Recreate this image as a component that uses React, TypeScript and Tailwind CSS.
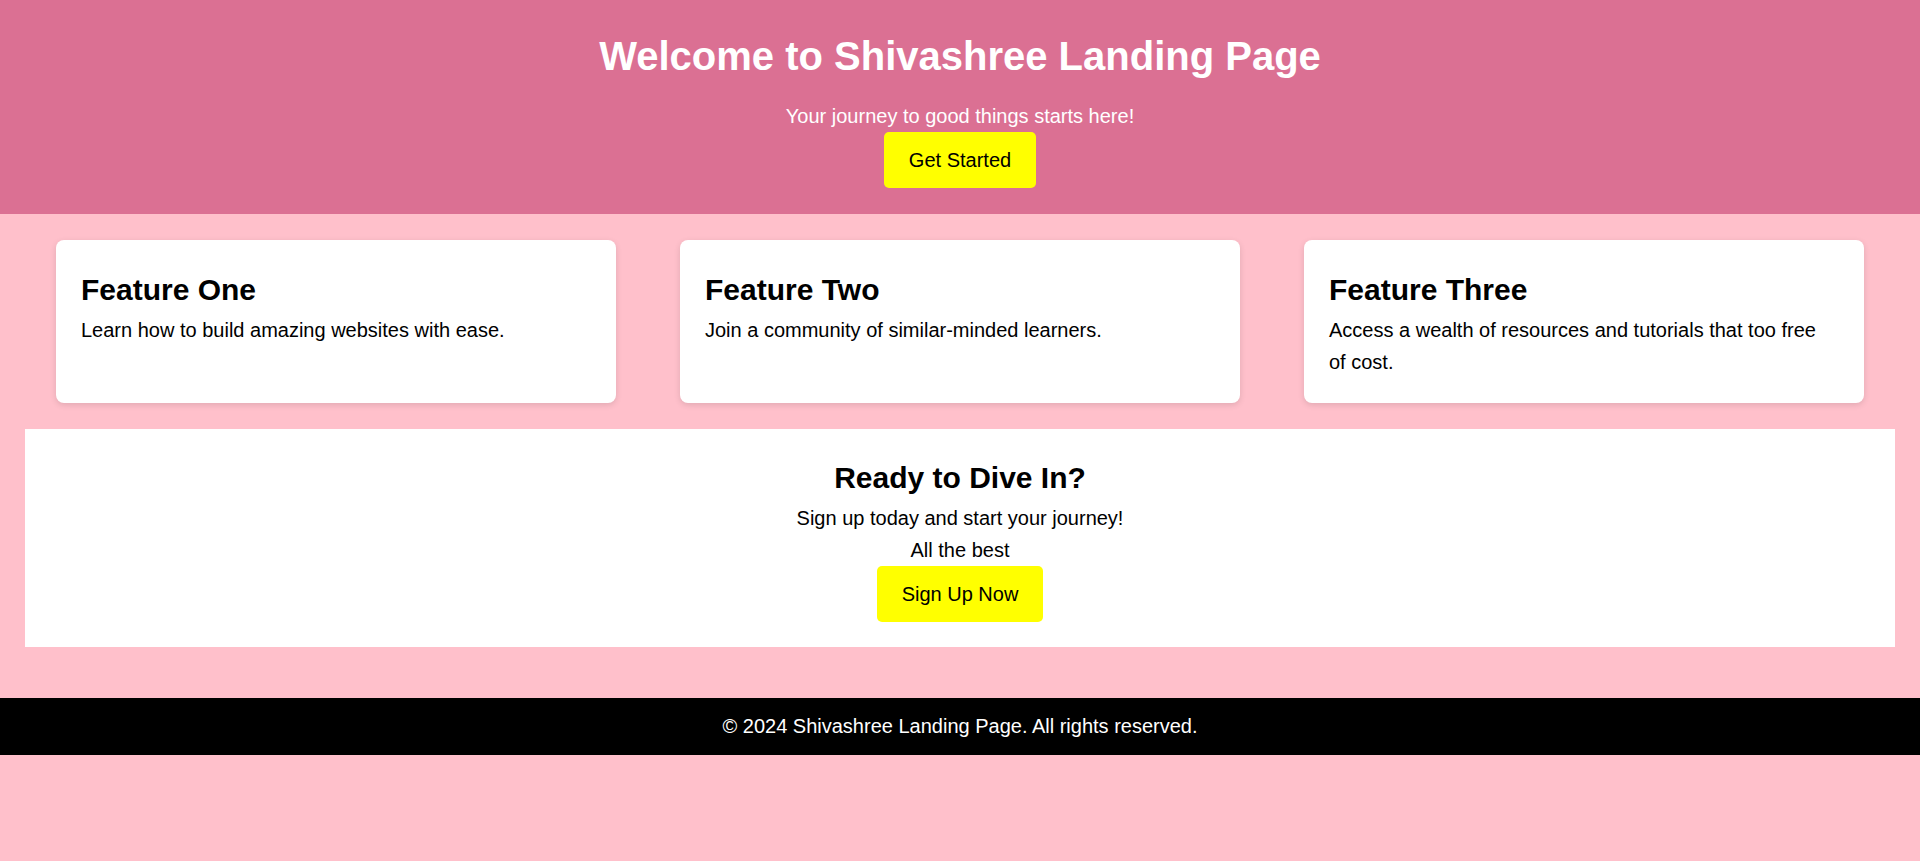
import React from "react";

const features = [
  { title: "Feature One", text: "Learn how to build amazing websites with ease." },
  { title: "Feature Two", text: "Join a community of similar-minded learners." },
  {
    title: "Feature Three",
    text: "Access a wealth of resources and tutorials that too free of cost.",
  },
];

export default function App() {
  return (
    <div
      className="min-h-[861px] bg-[#ffc0cb] text-black text-[20px] leading-[1.6]"
      style={{ fontFamily: '"Liberation Sans", Arial, sans-serif' }}
    >
      <header className="bg-[#db7093] text-white text-center pt-6 pb-[26px]">
        <h1 className="text-[40px] font-bold leading-[1.6] mb-3">
          Welcome to Shivashree Landing Page
        </h1>
        <p>Your journey to good things starts here!</p>
        <button className="bg-[#ffff00] text-black px-[25px] py-3 rounded-[5px] text-[20px] leading-[1.6]">
          Get Started
        </button>
      </header>

      <section className="flex gap-16 px-14 mt-[26px]">
        {features.map((f) => (
          <div
            key={f.title}
            className="flex-1 bg-white rounded-lg pt-[26px] pb-[25px] pl-[25px] pr-[28px] shadow-[0_2px_6px_rgba(0,0,0,0.12)]"
          >
            <h2 className="text-[30px] font-bold leading-[1.6]">{f.title}</h2>
            <p>{f.text}</p>
          </div>
        ))}
      </section>

      <section className="bg-white mx-[25px] mt-[26px] mb-[51px] p-[25px] text-center">
        <h2 className="text-[30px] font-bold leading-[1.6]">Ready to Dive In?</h2>
        <p>Sign up today and start your journey!</p>
        <p>All the best</p>
        <button className="bg-[#ffff00] text-black px-[25px] py-3 rounded-[5px] text-[20px] leading-[1.6]">
          Sign Up Now
        </button>
      </section>

      <footer className="bg-black text-white text-center pt-3 pb-[13px]">
        <p>© 2024 Shivashree Landing Page. All rights reserved.</p>
      </footer>
    </div>
  );
}
